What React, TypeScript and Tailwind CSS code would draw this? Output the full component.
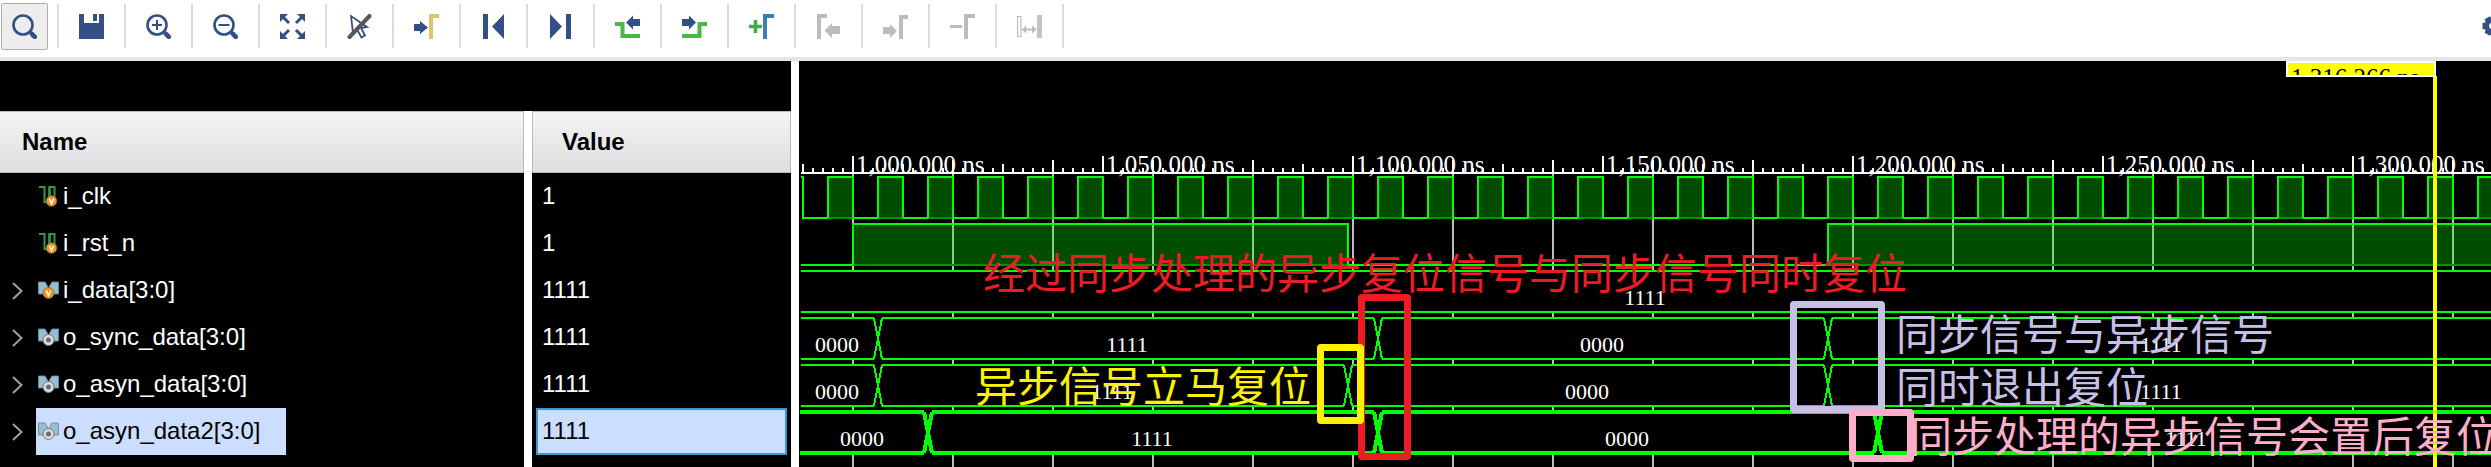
import type { ReactNode } from "react";

const BLUE = "#344f85";
const GREEN = "#4aba3e";
const GRAY = "#bcbcbc";

function Glyph({ children }: { children: ReactNode }) {
  return (
    <svg viewBox="0 0 25 25" className="size-[25px]" aria-hidden="true">
      {children}
    </svg>
  );
}

function Lens({ children }: { children?: ReactNode }) {
  return (
    <Glyph>
      <circle cx="11" cy="11" r="9.5" fill="none" stroke={BLUE} strokeWidth="2.6" />
      <path d="M17.5 17.5L19 19" stroke={BLUE} strokeWidth="3" />
      <path d="M20 20L22.8 22.8" stroke={BLUE} strokeWidth="4.6" strokeLinecap="round" />
      {children}
    </Glyph>
  );
}

const tools: { label: string; disabled?: boolean; icon: ReactNode }[] = [
  {
    label: "Save waveform",
    icon: (
      <Glyph>
        <path d="M0 0H5V9H20V0H25V25H0Z" fill={BLUE} />
        <path d="M14 0H18V7H14Z" fill={BLUE} />
      </Glyph>
    ),
  },
  {
    label: "Zoom in",
    icon: (
      <Lens>
        <path d="M6 11H16M11 6V16" stroke={BLUE} strokeWidth="2" />
      </Lens>
    ),
  },
  {
    label: "Zoom out",
    icon: (
      <Lens>
        <path d="M5.5 11H16.5" stroke={BLUE} strokeWidth="2" />
      </Lens>
    ),
  },
  {
    label: "Zoom fit",
    icon: (
      <Glyph>
        <path d="M0 0H8L0 8ZM25 0V8L17 0ZM0 25V17L8 25ZM25 25H17L25 17Z" fill={BLUE} />
        <path d="M3 3L9 9M22 3L16 9M3 22L9 16M22 22L16 16" stroke={BLUE} strokeWidth="3" />
      </Glyph>
    ),
  },
  {
    label: "Disable selection",
    icon: (
      <Glyph>
        <path d="M4 2L6 19L10 15.5L14.5 23.5L18 21.5L14 14L20 13Z" fill="#fff" stroke={BLUE} strokeWidth="1.8" />
        <path d="M22.5 2L2.5 23" stroke="#58585a" strokeWidth="4" strokeLinecap="round" />
      </Glyph>
    ),
  },
  {
    label: "Go to cursor",
    icon: (
      <Glyph>
        <path d="M0 10H6V7L14 13.5L6 20V17H0Z" fill={BLUE} />
        <path d="M15 0H25V4H19V25H15Z" fill="#dfc665" />
      </Glyph>
    ),
  },
  {
    label: "Go to start",
    icon: (
      <Glyph>
        <path d="M2 0H7V25H2ZM23 0V25L11 12.5Z" fill={BLUE} />
      </Glyph>
    ),
  },
  {
    label: "Go to end",
    icon: (
      <Glyph>
        <path d="M18 0H23V25H18ZM2 0V25L14 12.5Z" fill={BLUE} />
      </Glyph>
    ),
  },
  {
    label: "Previous transition",
    icon: (
      <Glyph>
        <path d="M0 10H7.5V22H25" fill="none" stroke={GREEN} strokeWidth="4" />
        <path d="M25 5H18V1.5L11 8.5L18 15.5V12H25Z" fill={BLUE} />
      </Glyph>
    ),
  },
  {
    label: "Next transition",
    icon: (
      <Glyph>
        <path d="M0 22H17.5V10H25" fill="none" stroke={GREEN} strokeWidth="4" />
        <path d="M0 5H7V1.5L14 8.5L7 15.5V12H0Z" fill={BLUE} />
      </Glyph>
    ),
  },
  {
    label: "Add marker",
    icon: (
      <Glyph>
        <path d="M0 12.5H13M6.5 6V19" stroke="#3fae49" strokeWidth="3.6" />
        <path d="M14 0H25V4H18V25H14Z" fill="#3a7fb5" />
      </Glyph>
    ),
  },
  {
    label: "Previous marker",
    disabled: true,
    icon: (
      <Glyph>
        <path d="M1 0H11V4H5V25H1ZM24 12H16V9L8.5 16.5L16 24V20H24Z" fill={GRAY} />
      </Glyph>
    ),
  },
  {
    label: "Next marker",
    disabled: true,
    icon: (
      <Glyph>
        <path d="M16 1H25V5H20V25H16ZM0 13H7V10L14 17L7 24V20H0Z" fill={GRAY} />
      </Glyph>
    ),
  },
  {
    label: "Remove marker",
    disabled: true,
    icon: (
      <Glyph>
        <path d="M14 0H25V4H18V25H14ZM0 11H12V14H0Z" fill={GRAY} />
      </Glyph>
    ),
  },
  {
    label: "Swap cursors",
    disabled: true,
    icon: (
      <Glyph>
        <path d="M0.5 2.5H4V22.5H0.5Z" fill="#fff" stroke={GRAY} strokeWidth="1.2" />
        <path d="M20 1H25V24H20Z" fill="#c4c4c4" />
        <path d="M5 15.5L9 11.5V14.5H15V11.5L19.5 15.5L15 19.5V16.5H9V19.5Z" fill={GRAY} />
      </Glyph>
    ),
  },
];

function Gear() {
  const teeth = [0, 60, 120, 180, 240, 300];
  return (
    <svg viewBox="0 0 20 20" className="size-5" aria-hidden="true">
      {teeth.map((a) => (
        <path key={a} d="M7 0.5H13L14 6H6Z" fill={BLUE} transform={`rotate(${a + 30} 10 10)`} />
      ))}
      <circle cx="10" cy="10" r="5.3" fill="none" stroke={BLUE} strokeWidth="4.6" />
    </svg>
  );
}

function Toolbar() {
  return (
    <header className="flex h-[61px] items-start overflow-hidden border-b-4 border-[#e6e6e6] bg-white">
      <button
        type="button"
        aria-label="Find"
        className="mt-[3px] ml-px flex h-[47px] w-[47px] shrink-0 items-center justify-center rounded-xs border border-[#adadad] bg-[#ededed]"
      >
        <Lens />
      </button>
      <div className="mt-1 ml-[9px] flex h-11 shrink-0 border-l-2 border-[#dcdcdc]">
        {tools.map((t) => (
          <button
            key={t.label}
            type="button"
            aria-label={t.label}
            disabled={t.disabled}
            className="flex w-[67px] items-center justify-center border-r-2 border-[#dcdcdc]"
          >
            {t.icon}
          </button>
        ))}
      </div>
      <button type="button" aria-label="Settings" className="mt-4 -mr-[11px] ml-auto shrink-0">
        <Gear />
      </button>
    </header>
  );
}

function ScalarIcon() {
  return (
    <svg viewBox="0 0 21 22" className="h-[22px] w-[21px]" aria-hidden="true">
      <path d="M1 2H6.5V17H11.5V2H16.5V13" fill="none" stroke="#35974a" strokeWidth="2" />
      <path d="M11.5 17V2" stroke="#35974a" strokeWidth="2.4" />
      <circle cx="13.5" cy="16" r="5.3" fill="#f7941e" stroke="#8a6a3c" strokeWidth="0.8" />
      <path d="M11.3 13.6L13.5 18.6L15.7 13.6" fill="none" stroke="#fff" strokeWidth="1.5" />
    </svg>
  );
}

function BusIcon({ input }: { input?: boolean }) {
  return (
    <svg viewBox="0 0 21 22" className="h-[22px] w-[21px]" aria-hidden="true">
      <path
        d="M0.5 3H7L10 8L7 15H0.5ZM20.5 3H14L11 8L14 15H20.5Z"
        fill="#92bfd6"
        stroke="#7c868c"
        strokeWidth="0.9"
      />
      {input ? (
        <>
          <circle cx="10.5" cy="14" r="5.5" fill="#f7941e" stroke="#8a6a3c" strokeWidth="0.8" />
          <path d="M8.3 11.6L10.5 16.6L12.7 11.6" fill="none" stroke="#fff" strokeWidth="1.5" />
        </>
      ) : (
        <>
          <circle cx="10.5" cy="14" r="5.5" fill="#dcdcdc" stroke="#77777a" strokeWidth="1" />
          <circle cx="10.5" cy="14" r="2.5" fill="#6c6c6e" />
        </>
      )}
    </svg>
  );
}

const signals = [
  { name: "i_clk", value: "1", kind: "scalar" },
  { name: "i_rst_n", value: "1", kind: "scalar" },
  { name: "i_data[3:0]", value: "1111", kind: "input" },
  { name: "o_sync_data[3:0]", value: "1111", kind: "output" },
  { name: "o_asyn_data[3:0]", value: "1111", kind: "output" },
  { name: "o_asyn_data2[3:0]", value: "1111", kind: "output", selected: true },
];

function SignalTable() {
  const head = "border-y border-[#b9b9bc] bg-linear-to-b from-[#f4f4f4] to-[#dedee1]";
  return (
    <section className="flex w-[799px] shrink-0 flex-col border-r-8 border-white bg-black text-2xl text-white">
      <div className="h-[50px] shrink-0" />
      <table className="w-full table-fixed border-separate border-spacing-0">
        <thead>
          <tr className="h-[62px] text-left text-black">
            <th className="w-[532px] border-r-8 border-white p-0">
              <div className={`flex h-[62px] items-center border-r pl-[22px] ${head}`}>Name</div>
            </th>
            <th className="p-0">
              <div className={`flex h-[62px] items-center border-x pl-[29px] ${head}`}>Value</div>
            </th>
          </tr>
        </thead>
        <tbody>
          {signals.map((s) => (
            <tr key={s.name} className="h-[47px]">
              <td className="border-r-8 border-white p-0">
                <div className="flex h-[47px] items-center">
                  <div className="flex w-9 shrink-0 pl-3">
                    {s.kind !== "scalar" && (
                      <button type="button" aria-label={`Expand ${s.name}`}>
                        <svg viewBox="0 0 11 18" className="h-[18px] w-[11px]" aria-hidden="true">
                          <path d="M1 1L9.5 9L1 17" fill="none" stroke="#a0a0a0" strokeWidth="2" />
                        </svg>
                      </button>
                    )}
                  </div>
                  <div
                    className={
                      s.selected
                        ? "flex h-full w-[250px] items-center gap-1 bg-[#ccdeff] pb-0.5 pl-0.5 text-black"
                        : "flex h-full w-[250px] items-center gap-1 pb-0.5 pl-0.5"
                    }
                  >
                    {s.kind === "scalar" ? <ScalarIcon /> : <BusIcon input={s.kind === "input"} />}
                    <span>{s.name}</span>
                  </div>
                </div>
              </td>
              <td className="px-1 py-0">
                <div
                  className={
                    s.selected
                      ? "flex h-[47px] items-center border-2 border-[#3c93d5] bg-[#ccdeff] pb-0.5 pl-1 text-black"
                      : "flex h-[47px] items-center border-2 border-transparent pb-0.5 pl-1"
                  }
                >
                  {s.value}
                </div>
              </td>
            </tr>
          ))}
        </tbody>
      </table>
      <div className="w-[532px] flex-1 border-r-8 border-white" />
    </section>
  );
}

const LIME = "#00ff00";
const LIMIT = 4000;
const VISIBLE_END = 1696;
const at = (ns: number) => 54 + (ns - 1000) * 5;

function steps(from: number, to: number, step: number) {
  const out: number[] = [];
  for (let v = from; v <= to; v += step) out.push(v);
  return out;
}

function tickTop(ns: number) {
  if (ns % 50 === 0) return 95;
  if (ns % 20 === 0) return 99;
  if (ns % 10 === 0) return 103;
  return 107;
}

function HighPulse({ from, to, top }: { from: number; to: number; top: number }) {
  return (
    <>
      <rect x={from} y={top} width={to - from} height="42" fill={LIME} fillOpacity="0.3" />
      <path d={`M${from} ${top + 41}H${to}`} stroke="#009400" strokeWidth="2" />
      <path d={`M${from} ${top + 41}V${top}H${to}V${top + 41}`} fill="none" stroke={LIME} strokeWidth="2" />
    </>
  );
}

function Bus({ top, edges, values, bold }: { top: number; edges: number[]; values: string[]; bold?: boolean }) {
  const bottom = top + 41;
  const xs = edges.map(at);
  const bounds = [2, ...xs, LIMIT];
  const shown = [-2, ...xs, VISIBLE_END];
  const start = bold ? 1 : 2;
  return (
    <g>
      <rect x={start} y={top} width={LIMIT} height="41" fill="#000" />
      <g stroke={LIME} strokeWidth={bold ? 4 : 2} fill="none">
        {values.map((_, i) => {
          const a = i === 0 ? start : bounds[i] + 4;
          const b = i === values.length - 1 ? LIMIT : bounds[i + 1] - 4;
          return <path key={i} d={`M${a} ${top}H${b}M${a} ${bottom}H${b}`} />;
        })}
        {xs.map((x) => (
          <path key={x} d={`M${x - 4} ${top}L${x + 4} ${bottom}M${x + 4} ${top}L${x - 4} ${bottom}`} />
        ))}
      </g>
      {values.map((v, i) => (
        <text
          key={i}
          x={Math.round((shown[i] + shown[i + 1]) / 2) - 1}
          y={bottom - 7}
          textAnchor="middle"
          className="fill-white text-[22px]"
        >
          {v}
        </text>
      ))}
    </g>
  );
}

function Waves() {
  const rstHigh = [
    [at(1000), at(1099)],
    [at(1195), LIMIT],
  ];
  return (
    <svg className="block h-full min-h-[406px] w-full font-['Liberation_Serif',serif]" shapeRendering="crispEdges">
      {steps(1000, 1700, 20).map((t) => (
        <rect key={t} x={at(t) - 1} y="113" width="2" height="100%" fill="#bebebe" />
      ))}

      <path d="M2 116H4V157" fill="none" stroke={LIME} strokeWidth="2" />
      <path d={`M3 157H${LIMIT}`} stroke={LIME} strokeWidth="2" />
      {steps(995, 1700, 10).map((t) => (
        <g key={t}>
          <rect x={at(t)} y="116" width="25" height="42" fill="#000" />
          <HighPulse from={at(t)} to={at(t + 5)} top={116} />
        </g>
      ))}

      <path d={`M2 204H${at(1000)}M${at(1099)} 204H${at(1195)}`} stroke={LIME} strokeWidth="2" />
      {rstHigh.map(([a, b]) => (
        <HighPulse key={a} from={a} to={b} top={163} />
      ))}

      <Bus top={210} edges={[]} values={["1111"]} />
      <Bus top={257} edges={[1005, 1105, 1195]} values={["0000", "1111", "0000", "1111"]} />
      <Bus top={304} edges={[1005, 1099, 1195]} values={["0000", "1111", "0000", "1111"]} />
      <Bus top={351} edges={[1015, 1105, 1205]} values={["0000", "1111", "0000", "1111"]} bold />

      <rect x="2" y="111" width="100%" height="2" fill="#fff" />
      {steps(990, 1700, 2).map((t) => (
        <rect key={t} x={at(t) - 1} y={tickTop(t)} width="2" height={112 - tickTop(t)} fill="#fff" />
      ))}
      {steps(1000, 1300, 50).map((t) => (
        <text key={t} x={at(t) + 3} y="112" className="fill-white text-[25px]">
          {`1,${String(t - 1000).padStart(3, "0")}.000 ns`}
        </text>
      ))}
    </svg>
  );
}

function Note({ className, children }: { className: string; children: string }) {
  return (
    <p
      className={`absolute text-[42px] leading-[42px] font-normal whitespace-nowrap font-['Noto_Sans_CJK_SC',sans-serif] ${className}`}
    >
      {children}
    </p>
  );
}

function WavePanel() {
  const frame = "absolute rounded-sm border-[7px]";
  return (
    <section className="relative min-w-0 flex-1 overflow-hidden bg-black">
      <Waves />
      <div className="absolute top-[15px] bottom-0 left-[1634px] w-1 bg-[#ffff00]" />
      <div className="absolute top-0 left-[1487px] h-4 w-[150px] overflow-hidden border-2 border-white bg-[#ffff00] pl-[3px] text-[25px] leading-[30px] whitespace-nowrap text-black font-['Liberation_Serif',serif]">
        1,316.266 ns
      </div>

      <div className={`${frame} top-[233px] left-[559px] h-[166px] w-[53px] border-[#ed1c24]`} />
      <div className={`${frame} top-[283px] left-[518px] h-20 w-[47px] border-[#fff200]`} />
      <div className={`${frame} top-[240px] left-[991px] h-[112px] w-[95px] border-[#c8bfe7]`} />
      <div className={`${frame} top-[348px] left-[1050px] h-[53px] w-[65px] border-[#ffaec9]`} />

      <Note className="top-[189px] left-[184px] text-[#ed1c24]">经过同步处理的异步复位信号与同步信号同时复位</Note>
      <Note className="top-[302px] left-[176px] text-[#fff200]">异步信号立马复位</Note>
      <Note className="top-[250px] left-[1097px] text-[#c8bfe7]">同步信号与异步信号</Note>
      <Note className="top-[303px] left-[1097px] text-[#c8bfe7]">同时退出复位</Note>
      <Note className="top-[352px] left-[1111px] text-[#ffaec9]">同步处理的异步信号会置后复位</Note>
    </section>
  );
}

export default function App() {
  return (
    <div className="flex min-h-screen flex-col bg-white font-['Liberation_Sans',Arial,sans-serif]">
      <Toolbar />
      <main className="flex flex-1">
        <SignalTable />
        <WavePanel />
      </main>
    </div>
  );
}
